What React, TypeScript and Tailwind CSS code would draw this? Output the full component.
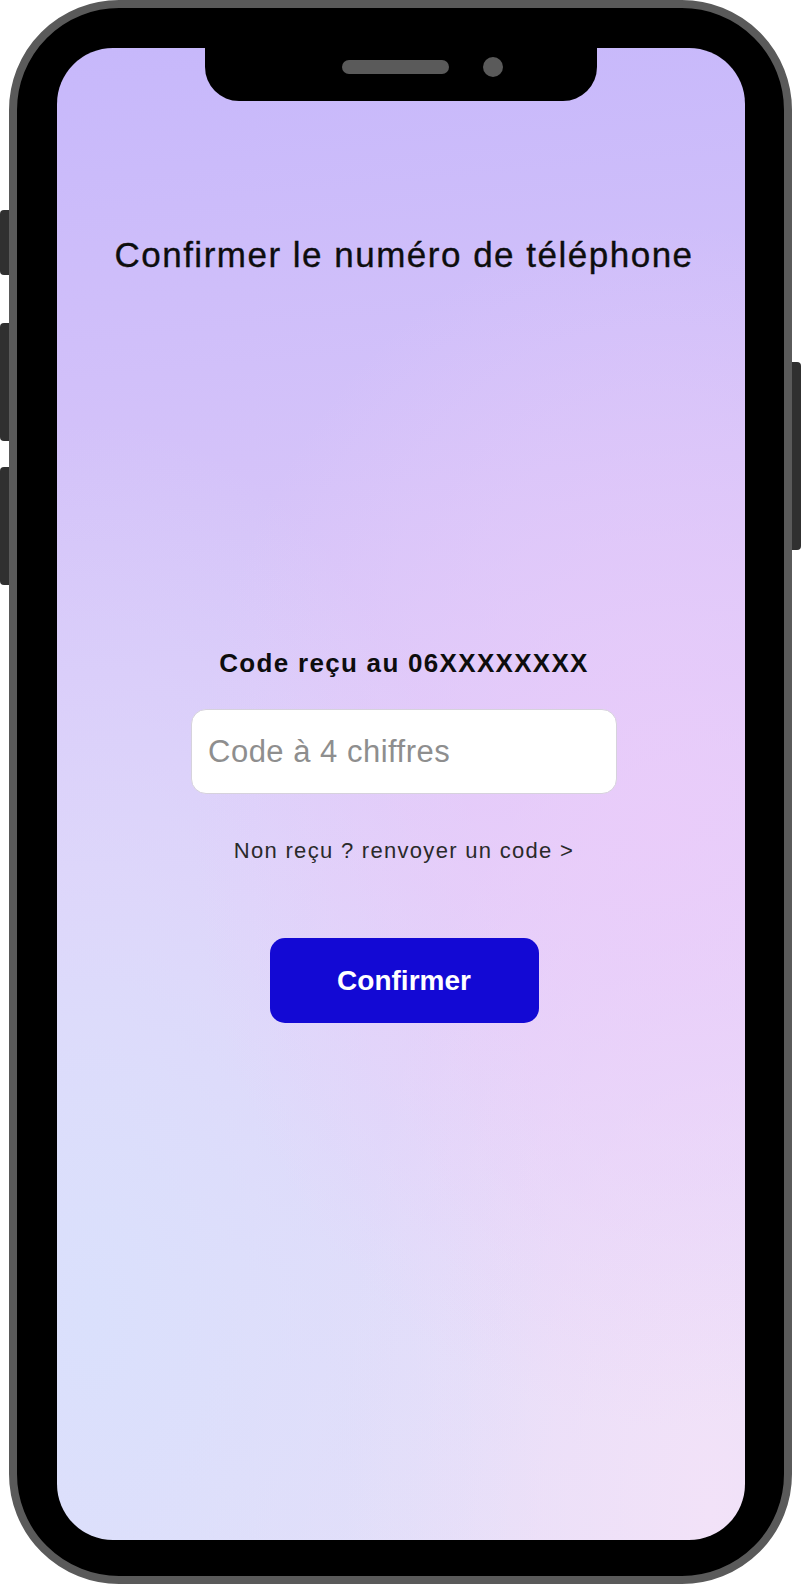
import { useState } from 'react'

export default function App() {
  const [code, setCode] = useState('')

  return (
    <div className="w-[801px] h-[1586px] bg-white flex font-['Liberation_Sans',Arial,sans-serif]">
      {/* left hardware buttons */}
      <div className="w-[9px] flex flex-col">
        <div className="mt-[210px] h-[65px] bg-[#303030] rounded-l-[4px]" />
        <div className="mt-[48px] h-[118px] bg-[#303030] rounded-l-[4px]" />
        <div className="mt-[26px] h-[118px] bg-[#303030] rounded-l-[4px]" />
      </div>

      <div className="w-[783px] h-[1584px] bg-black border-[8px] border-[#5a5a5a] rounded-[110px] pt-[40px] pl-[40px]">
        <div className="relative w-[688px] h-[1492px] rounded-[56px] overflow-hidden bg-[radial-gradient(ellipse_at_88%_52%,rgba(234,204,250,0.9),transparent_55%),radial-gradient(ellipse_at_5%_85%,rgba(218,224,252,1),transparent_50%),radial-gradient(ellipse_at_95%_98%,rgba(242,226,248,1),transparent_40%),linear-gradient(175deg,#c7b8fb_0%,#d5c3f9_30%,#e1cdf9_55%,#e3dbf9_80%,#e6def8_100%)]">
          {/* notch */}
          <div className="absolute left-[148px] top-0 w-[392px] h-[53px] bg-black rounded-b-[34px] flex items-start pt-[9px] pl-[137px]">
            <div className="h-[20px] flex items-center gap-[34px]">
              <div className="w-[107px] h-[14px] rounded-full bg-[#5a5a5a]" />
              <div className="w-[20px] h-[20px] rounded-full bg-[#5a5a5a]" />
            </div>
          </div>

          <div className="flex flex-col items-center pl-[6px] pt-[187px]">
            <h1 className="text-[35px] leading-[40px] tracking-[1.5px] text-[#0d0d0d] font-normal [-webkit-text-stroke:0.35px_#0d0d0d]">
              Confirmer le numéro de téléphone
            </h1>

            <p className="mt-[373px] text-[26px] leading-[30px] tracking-[1.3px] font-bold text-[#0d0d0d]">
              Code reçu au 06XXXXXXXX
            </p>

            <input
              value={code}
              onChange={(e) => setCode(e.target.value)}
              placeholder="Code à 4 chiffres"
              className="mt-[31px] w-[426px] h-[85px] bg-white border border-[#d6d2dc] rounded-[15px] px-4 text-[31px] tracking-[0.5px] text-[#222] placeholder:text-[#8e8e8e] outline-none"
            />

            <button className="mt-[45px] text-[22px] leading-[24px] tracking-[1.3px] text-[#2a2a2a] bg-transparent">
              Non reçu ? renvoyer un code &gt;
            </button>

            <button className="mt-[75px] w-[269px] h-[85px] rounded-[15px] bg-[#1309d4] text-white text-[28px] font-bold">
              Confirmer
            </button>
          </div>
        </div>
      </div>

      {/* right hardware button */}
      <div className="w-[9px] flex flex-col">
        <div className="mt-[362px] h-[188px] bg-[#303030] rounded-r-[4px]" />
      </div>
    </div>
  )
}
